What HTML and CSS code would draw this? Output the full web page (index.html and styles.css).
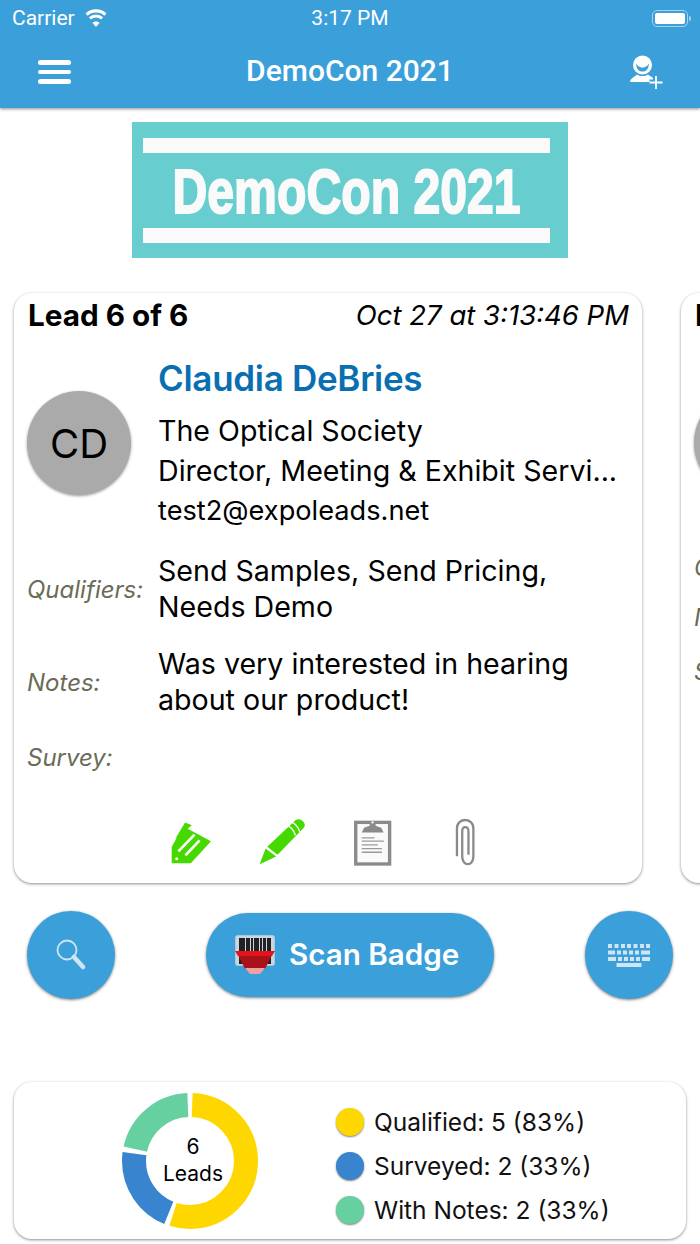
FILE: index.html
```html
<!DOCTYPE html>
<html lang="en">
<head>
  <meta charset="UTF-8">
  <meta name="viewport" content="width=device-width, initial-scale=1.0">
  <title>DemoCon 2021</title>
  <link rel="stylesheet" href="styles.css">
</head>
<body>
  <header class="header">
    <div class="status-bar">
      <div class="status-left">
        <span>Carrier</span>
        <svg class="wifi" viewBox="0 0 24 18"><path d="M12 18l-3.6-4.2a5.4 5.4 0 0 1 7.2 0z" fill="#fff"/><path d="M5.9 11a9 9 0 0 1 12.2 0M2.6 7.2a14 14 0 0 1 18.8 0" transform="translate(0 -1.6)" fill="none" stroke="#fff" stroke-width="3.2"/></svg>
      </div>
      <span class="status-time">3:17 PM</span>
      <div class="battery"><div class="battery-fill"></div></div>
    </div>
    <div class="nav-bar">
      <div class="menu-icon"><span></span><span></span><span></span></div>
      <h1>DemoCon 2021</h1>
      <svg class="add-lead" viewBox="0 0 36 36">
        <circle cx="13.5" cy="11" r="9.5" fill="#fff"/>
        <path d="M7 9.5c3 5.5 10 5.5 13 0c-.5 6.5-3.5 8-6.500 8s-6-1.500-6.500-8z" fill="#3b9fd9"/>
        <path d="M1 28c.5-4 6-6 7-7.500c3 2 8 2 11 0c1 1.500 5 2.500 6 4.500v3z" fill="#fff"/>
        <path d="M27 22v13M20.500 28.500h13" stroke="#3b9fd9" stroke-width="6"/>
        <path d="M27 22v13M20.500 28.500h13" stroke="#fff" stroke-width="1.800"/>
      </svg>
    </div>
  </header>

  <div class="banner">
    <div class="banner-bar"></div>
    <div class="banner-text"><span>DemoCon 2021</span></div>
    <div class="banner-bar"></div>
  </div>

  <div class="lead-list">
    <section class="card lead-card">
      <div class="lead-head">
        <strong>Lead 6 of 6</strong>
        <em>Oct 27 at 3:13:46 PM</em>
      </div>
      <div class="contact">
        <div class="avatar">CD</div>
        <div class="contact-info">
          <h2>Claudia DeBries</h2>
          <p class="contact-line">The Optical Society</p>
          <p class="contact-line">Director, Meeting &amp; Exhibit Servi...</p>
          <p class="contact-line contact-email">test2@expoleads.net</p>
        </div>
      </div>
      <div class="field field-qualifiers">
        <span class="field-label">Qualifiers:</span>
        <span class="field-value">Send Samples, Send Pricing,<br>Needs Demo</span>
      </div>
      <div class="field field-notes">
        <span class="field-label">Notes:</span>
        <span class="field-value">Was very interested in hearing<br>about our product!</span>
      </div>
      <div class="field field-survey">
        <span class="field-label">Survey:</span>
      </div>
      <div class="lead-actions">
        <div class="action">
          <svg class="icon-tag" viewBox="60 55 125 133">
            <path d="M75 112l30-50 20 8z" fill="#46d900"/>
            <path d="M65 135l34-62 83 45-60 65H65z" fill="#46d900"/>
            <path d="M106 160l42-45M85 148l48-50" stroke="#fff" stroke-width="8" fill="none"/>
            <circle cx="80" cy="170" r="4.500" fill="#fff"/>
          </svg>
        </div>
        <div class="action">
          <svg class="icon-pencil" viewBox="325 50 145 145">
            <path d="M330 190l18-48 32 24z" fill="#46d900"/>
            <path d="M353 137l85-80c8-6 18-3 24 4s6 14 0 20l-78 80z" fill="#46d900"/>
            <path d="M410 70c14 6 24 18 28 32M425 62c14 6 22 16 26 30" stroke="#fff" stroke-width="4" fill="none"/>
          </svg>
        </div>
        <div class="action">
          <svg class="icon-clipboard" viewBox="612 50 116 146">
            <rect x="620" y="66" width="101" height="124" fill="#fafafa" stroke="#8a8a8a" stroke-width="10"/>
            <path d="M638 96l7-14 17-6a9 9 0 1 1 17 0l17 6 7 14z" fill="#8a8a8a"/>
            <circle cx="670" cy="66" r="3.500" fill="#fafafa"/>
            <path d="M638 112h38M638 122h66M638 133h48M638 144h60M638 155h60" stroke="#9a9a9a" stroke-width="4"/>
          </svg>
        </div>
        <div class="action">
          <svg class="icon-clip" viewBox="910 50 70 146">
            <path d="M919 165V80c0-34 50-34 50 0v85c0 32-34 32-34 0V90c0-18 19-18 19 0v70" fill="none" stroke="#8a8a8a" stroke-width="7"/>
          </svg>
        </div>
      </div>
    </section>

    <section class="card lead-card">
      <div class="lead-head">
        <strong>Lead 5 of 6</strong>
      </div>
      <div class="contact">
        <div class="avatar"></div>
      </div>
      <div class="field field-qualifiers">
        <span class="field-label">Qualifiers:</span>
      </div>
      <div class="field field-notes">
        <span class="field-label">Notes:</span>
      </div>
      <div class="field field-survey">
        <span class="field-label">Survey:</span>
      </div>
    </section>
  </div>

  <div class="button-row">
    <button class="round-btn">
      <svg class="icon-search" viewBox="0 0 30 32">
        <circle cx="11" cy="11" r="9.500" fill="none" stroke="#cfe5f3" stroke-width="1.800"/>
        <path d="M18 18l9 10" stroke="#cfe5f3" stroke-width="4.500" stroke-linecap="round"/>
      </svg>
    </button>
    <button class="scan-btn">
      <svg class="icon-barcode" viewBox="0 0 40 39">
        <rect x="0.500" y="0.500" width="39" height="30" rx="2" fill="#c9d6de" stroke="#a9c9de"/>
        <path d="M4 3h6v26H4zM11 3h4v26h-4zM16 3h2v26h-2zM19 3h5v26h-5zM25 3h2v26h-2zM28 3h3v26h-3zM32 3h4v26h-4z" fill="#222"/>
        <path d="M3 20h34l-7 14H10z" fill="#a81218"/>
        <path d="M0 16h40l-3 5H3z" fill="#e3141c"/>
        <path d="M10 33h20l-5 6h-10z" fill="#f0a0a0"/>
      </svg>
      <span>Scan Badge</span>
    </button>
    <button class="round-btn">
      <svg class="icon-keyboard" viewBox="0 0 42 23">
        <path d="M0 0h4v4H0zM6.500 0h4v4h-4zM13 0h4v4h-4zM19 0h4v4h-4zM25.500 0h4v4h-4zM32 0h4v4h-4zM38 0h4v4h-4zM0 6.500h7v4H0zM9 6.500h4v4H9zM15 6.500h4v4h-4zM21 6.500h4v4h-4zM27 6.500h4v4h-4zM33 6.500h9v4h-9zM0 13h8v4H0zM10 13h4v4h-4zM16 13h4v4h-4zM22 13h4v4h-4zM28 13h4v4h-4zM34 13h8v4h-8zM8.500 19h25v4h-25z" fill="#cfe5f3"/>
      </svg>
    </button>
  </div>

  <section class="card summary">
    <div class="donut">
      <svg viewBox="0 0 136 136">
        <g fill="none" stroke-width="24" transform="rotate(-90 68 68)">
          <circle cx="68" cy="68" r="56" pathLength="360" stroke="#ffd700" stroke-dasharray="195.400 164.600" stroke-dashoffset="-2.300"/>
          <circle cx="68" cy="68" r="56" pathLength="360" stroke="#3884cf" stroke-dasharray="75.400 284.600" stroke-dashoffset="-202.300"/>
          <circle cx="68" cy="68" r="56" pathLength="360" stroke="#67d0a0" stroke-dasharray="75.400 284.600" stroke-dashoffset="-282.300"/>
        </g>
      </svg>
      <div class="donut-label">6<br>Leads</div>
    </div>
    <ul class="legend">
      <li><span class="dot dot-yellow"></span>Qualified: 5 (83%)</li>
      <li><span class="dot dot-blue"></span>Surveyed: 2 (33%)</li>
      <li><span class="dot dot-green"></span>With Notes: 2 (33%)</li>
    </ul>
  </section>
</body>
</html>
```

FILE: styles.css
```css
html, body {
  height: 100%;
}

body {
  margin: 0;
  overflow: hidden;
  background-color: #ffffff;
  color: #000000;
  font-family: 'Inter', 'Roboto', sans-serif;
}

h1, h2, p, ul {
  margin: 0;
  padding: 0;
}

/* header */
.header {
  height: 108px;
  background-color: #3b9fd9;
  color: #ffffff;
  box-shadow: 0 1px 3px rgba(0, 0, 0, 0.45);
  position: relative;
  z-index: 1;
}

.status-bar {
  height: 36px;
  display: grid;
  grid-template-columns: 1fr auto 1fr;
  align-items: center;
  padding: 0 12px;
  font-family: 'Roboto', sans-serif;
  font-size: 21px;
}

.status-left {
  display: flex;
  align-items: center;
  gap: 9px;
}

.wifi {
  width: 24px;
  height: 18px;
}

.battery {
  width: 36px;
  height: 17px;
  justify-self: end;
  border: 1px solid #a5d3ee;
  border-radius: 5px;
  padding: 2px;
  box-sizing: border-box;
  display: flex;
  position: relative;
}

.battery::after {
  content: '';
  position: absolute;
  right: -4px;
  top: 5px;
  width: 2px;
  height: 5px;
  background-color: #a5d3ee;
  border-radius: 0 2px 2px 0;
}

.battery-fill {
  flex: 1;
  background-color: #ffffff;
  border-radius: 2px;
}

.nav-bar {
  height: 72px;
  display: flex;
  align-items: center;
  justify-content: space-between;
  padding: 0 38px;
}

.nav-bar h1 {
  margin-bottom: 3px;
  font-family: 'Roboto', sans-serif;
  font-size: 30px;
  font-weight: 500;
}

.menu-icon {
  width: 33px;
  display: flex;
  flex-direction: column;
  gap: 5px;
}

.menu-icon span {
  height: 4.5px;
  background-color: #ffffff;
  border-radius: 3px;
}

.add-lead {
  width: 36px;
  height: 36px;
  margin-right: -3px;
}

/* banner */
.banner {
  width: 436px;
  height: 136px;
  margin: 14px auto 0;
  padding: 16px 18px 15px 11px;
  box-sizing: border-box;
  background-color: #67cdce;
  display: flex;
  flex-direction: column;
  justify-content: space-between;
}

.banner-bar {
  height: 15px;
  background-color: #fafafa;
}

.banner-text {
  display: flex;
  justify-content: center;
  color: #fafafa;
  font-family: 'Liberation Sans', sans-serif;
  font-weight: bold;
  font-size: 63px;
  line-height: 60px;
  white-space: nowrap;
}

.banner-text span {
  display: block;
  transform: scaleX(0.765);
  -webkit-text-stroke: 2px #fafafa;
}

/* cards */
.card {
  background-color: #ffffff;
  border-radius: 18px;
  box-shadow: 0 1px 3px rgba(0, 0, 0, 0.45);
}

.lead-list {
  display: flex;
  gap: 39px;
  padding: 35px 14px 4px;
  margin-bottom: 24px;
  overflow: hidden;
}

.lead-card {
  flex: 0 0 628px;
  height: 590px;
  box-sizing: border-box;
  padding: 0 13px 18px 14px;
  display: flex;
  flex-direction: column;
}

.lead-head {
  height: 44px;
  display: flex;
  align-items: center;
  justify-content: space-between;
  white-space: nowrap;
}

.lead-head strong {
  font-size: 29.7px;
  font-weight: 700;
}

.lead-head em {
  font-size: 27.5px;
}

.contact {
  height: 173px;
  margin-top: 21px;
  display: flex;
  align-items: center;
}

.avatar {
  width: 104px;
  height: 104px;
  margin: -3px 0 0 -1px;
  flex: none;
  border-radius: 50%;
  background-color: #aaaaaa;
  box-shadow: 0 1px 3px rgba(0, 0, 0, 0.4);
  display: flex;
  align-items: center;
  justify-content: center;
  font-size: 40px;
}

.contact-info {
  margin-left: 27px;
  min-width: 0;
  white-space: nowrap;
}

.contact-info h2 {
  font-size: 35px;
  line-height: 40px;
  font-weight: 600;
  color: #0a6fb0;
  letter-spacing: -0.3px;
  margin-bottom: 13px;
}

.contact-line {
  font-size: 28.6px;
  line-height: 40px;
}

.contact-email {
  font-size: 27.2px;
}

.field {
  display: flex;
  align-items: center;
}

.field-qualifiers {
  margin-top: 22px;
}

.field-notes {
  margin-top: 21px;
}

.field-survey {
  margin-top: 21px;
  height: 36px;
}

.field-label {
  flex: 0 0 131px;
  margin-left: -1px;
  font-size: 24px;
  font-style: italic;
  color: #6b6b57;
}

.field-value {
  font-size: 28.6px;
  line-height: 36px;
  white-space: nowrap;
}

.lead-actions {
  margin-top: auto;
  margin-left: 117px;
  display: flex;
}

.action {
  width: 91px;
  height: 46px;
  display: flex;
  align-items: center;
  justify-content: center;
}

.icon-tag {
  width: 42px;
  height: 45px;
}

.icon-pencil {
  width: 48px;
  height: 48px;
}

.icon-clipboard {
  width: 39px;
  height: 49px;
  margin-top: -2px;
}

.icon-clip {
  width: 23px;
  height: 49px;
  margin-left: 3px;
}

/* buttons */
.button-row {
  display: flex;
  align-items: center;
  justify-content: space-between;
  padding: 0 27px;
}

.round-btn {
  width: 88px;
  height: 88px;
  padding: 0;
  border: none;
  border-radius: 50%;
  background-color: #3b9fd9;
  box-shadow: 0 1px 3px rgba(0, 0, 0, 0.5);
  display: flex;
  align-items: center;
  justify-content: center;
}

.icon-search {
  width: 30px;
  height: 32px;
}

.icon-keyboard {
  width: 42px;
  height: 23px;
}

.scan-btn {
  width: 288px;
  height: 84px;
  padding: 0 0 2px 29px;
  border: none;
  border-radius: 42px;
  background-color: #3b9fd9;
  box-shadow: 0 1px 3px rgba(0, 0, 0, 0.5);
  display: flex;
  align-items: center;
  gap: 14px;
  color: #ffffff;
  font-family: 'Inter', sans-serif;
  font-size: 29.6px;
  font-weight: 600;
}

.icon-barcode {
  width: 40px;
  height: 39px;
}

/* summary */
.summary {
  margin: 83px 14px 0;
  height: 157px;
  display: flex;
  align-items: center;
  padding-left: 108px;
}

.donut {
  width: 136px;
  height: 136px;
  position: relative;
}

.donut svg {
  display: block;
  width: 136px;
  height: 136px;
}

.donut-label {
  position: absolute;
  inset: 0 0 1px 6px;
  display: flex;
  flex-direction: column;
  justify-content: center;
  text-align: center;
  font-size: 21px;
  line-height: 27px;
}

.legend {
  list-style: none;
  margin: 10px 0 0 78px;
}

.legend li {
  height: 44px;
  display: flex;
  align-items: center;
  gap: 10px;
  font-size: 24.5px;
  white-space: nowrap;
  color: #111111;
}

.dot {
  width: 28px;
  height: 28px;
  border-radius: 50%;
  box-shadow: 0 1px 2px rgba(0, 0, 0, 0.5);
}

.dot-yellow {
  background-color: #ffd700;
}

.dot-blue {
  background-color: #3884cf;
}

.dot-green {
  background-color: #67d0a0;
}
```
